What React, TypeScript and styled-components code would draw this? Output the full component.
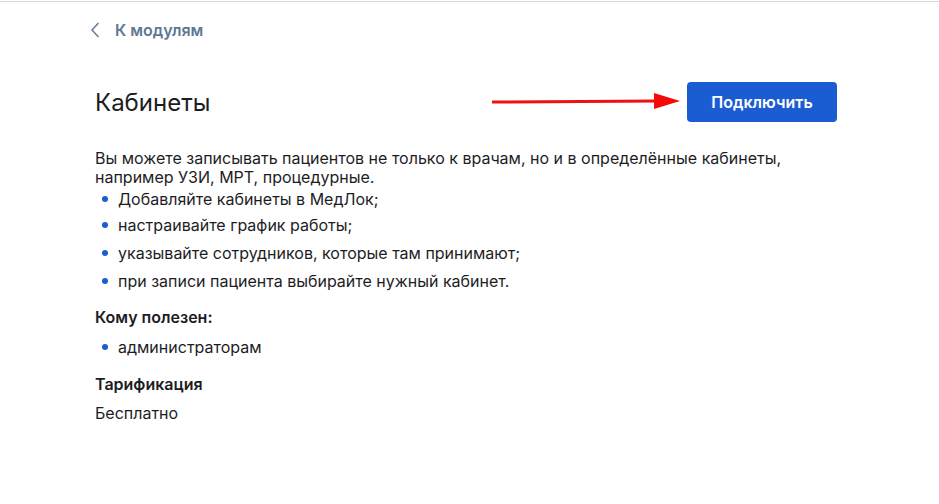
import React from 'react';
import styled, { createGlobalStyle } from 'styled-components';

const GlobalStyle = createGlobalStyle`
  html, body {
    margin: 0;
    padding: 0;
    background: #fff;
    font-family: Inter, "Noto Sans", sans-serif;
    color: #1c1c1e;
  }
`;

const features = [
  'Добавляйте кабинеты в МедЛок;',
  'настраивайте график работы;',
  'указывайте сотрудников, которые там принимают;',
  'при записи пациента выбирайте нужный кабинет.',
];

const App: React.FC = () => {
  return (
    <>
      <GlobalStyle />
      <TopLine />
      <Page>
        <BackLink href="#">
          <svg width="12" height="18" viewBox="0 0 12 18">
            <path d="M9.5 2 L3 9 L9.5 16" fill="none" stroke="#6b8197" strokeWidth="1.6" />
          </svg>
          К модулям
        </BackLink>

        <HeaderRow>
          <Title>Кабинеты</Title>
          <Actions>
            <svg width="190" height="20" viewBox="0 0 190 20">
              <line x1="2" y1="10" x2="166" y2="9" stroke="#f01010" strokeWidth="3" />
              <polygon points="164,1 190,9 164,17" fill="#f50a0a" />
            </svg>
            <ConnectButton>Подключить</ConnectButton>
          </Actions>
        </HeaderRow>

        <Text>
          Вы можете записывать пациентов не только к врачам, но и в определённые кабинеты,
          <br />
          например УЗИ, МРТ, процедурные.
        </Text>
        <List>
          {features.map((f) => (
            <Item key={f}>{f}</Item>
          ))}
        </List>

        <SectionTitle $top={10}>Кому полезен:</SectionTitle>
        <List $top={6}>
          <Item>администраторам</Item>
        </List>

        <SectionTitle $top={13}>Тарификация</SectionTitle>
        <Plain>Бесплатно</Plain>
      </Page>
    </>
  );
};

export default App;

const TopLine = styled.div`
  height: 1px;
  margin-top: 1px;
  background: #d3d8de;
`;

const Page = styled.main`
  width: 742px;
  padding: 0 0 0 95px;
`;

const BackLink = styled.a`
  display: inline-flex;
  align-items: center;
  gap: 14px;
  margin: 16px 0 0 -6px;
  color: #5f7891;
  font-size: 16px;
  font-weight: 600;
  text-decoration: none;
  height: 24px;
`;

const HeaderRow = styled.div`
  display: flex;
  align-items: center;
  justify-content: space-between;
  margin-top: 39px;
  height: 40px;
`;

const Title = styled.h1`
  margin: 0;
  font-size: 24px;
  font-weight: 400;
  color: #1d1d1f;
`;

const Actions = styled.div`
  display: flex;
  align-items: center;
  gap: 7px;
`;

const ConnectButton = styled.button`
  width: 150px;
  height: 40px;
  border: none;
  border-radius: 4px;
  background: #1b5cd2;
  color: #fff;
  font-family: Inter, sans-serif;
  font-size: 16px;
  font-weight: 600;
  cursor: pointer;
`;

const Text = styled.p`
  margin: 27px 0 0;
  font-size: 16px;
  line-height: 19px;
  color: #1d1d1f;
`;

const List = styled.ul<{ $top?: number }>`
  list-style: none;
  margin: ${(p) => p.$top ?? 0}px 0 0;
  padding: 0 0 0 7px;
`;

const Item = styled.li`
  display: flex;
  align-items: center;
  gap: 10px;
  height: 28px;
  font-size: 16px;
  color: #1d1d1f;

  &::before {
    content: '';
    width: 6px;
    height: 6px;
    border-radius: 50%;
    background: #1b5cd2;
    flex-shrink: 0;
  }

  &:first-child {
    height: 24px;
  }
`;

const SectionTitle = styled.h3<{ $top: number }>`
  margin: ${(p) => p.$top}px 0 0;
  font-size: 16px;
  font-weight: 600;
  line-height: 24px;
  color: #1d1d1f;
`;

const Plain = styled.p`
  margin: 5px 0 0;
  font-size: 16px;
  line-height: 24px;
  color: #1d1d1f;
`;
